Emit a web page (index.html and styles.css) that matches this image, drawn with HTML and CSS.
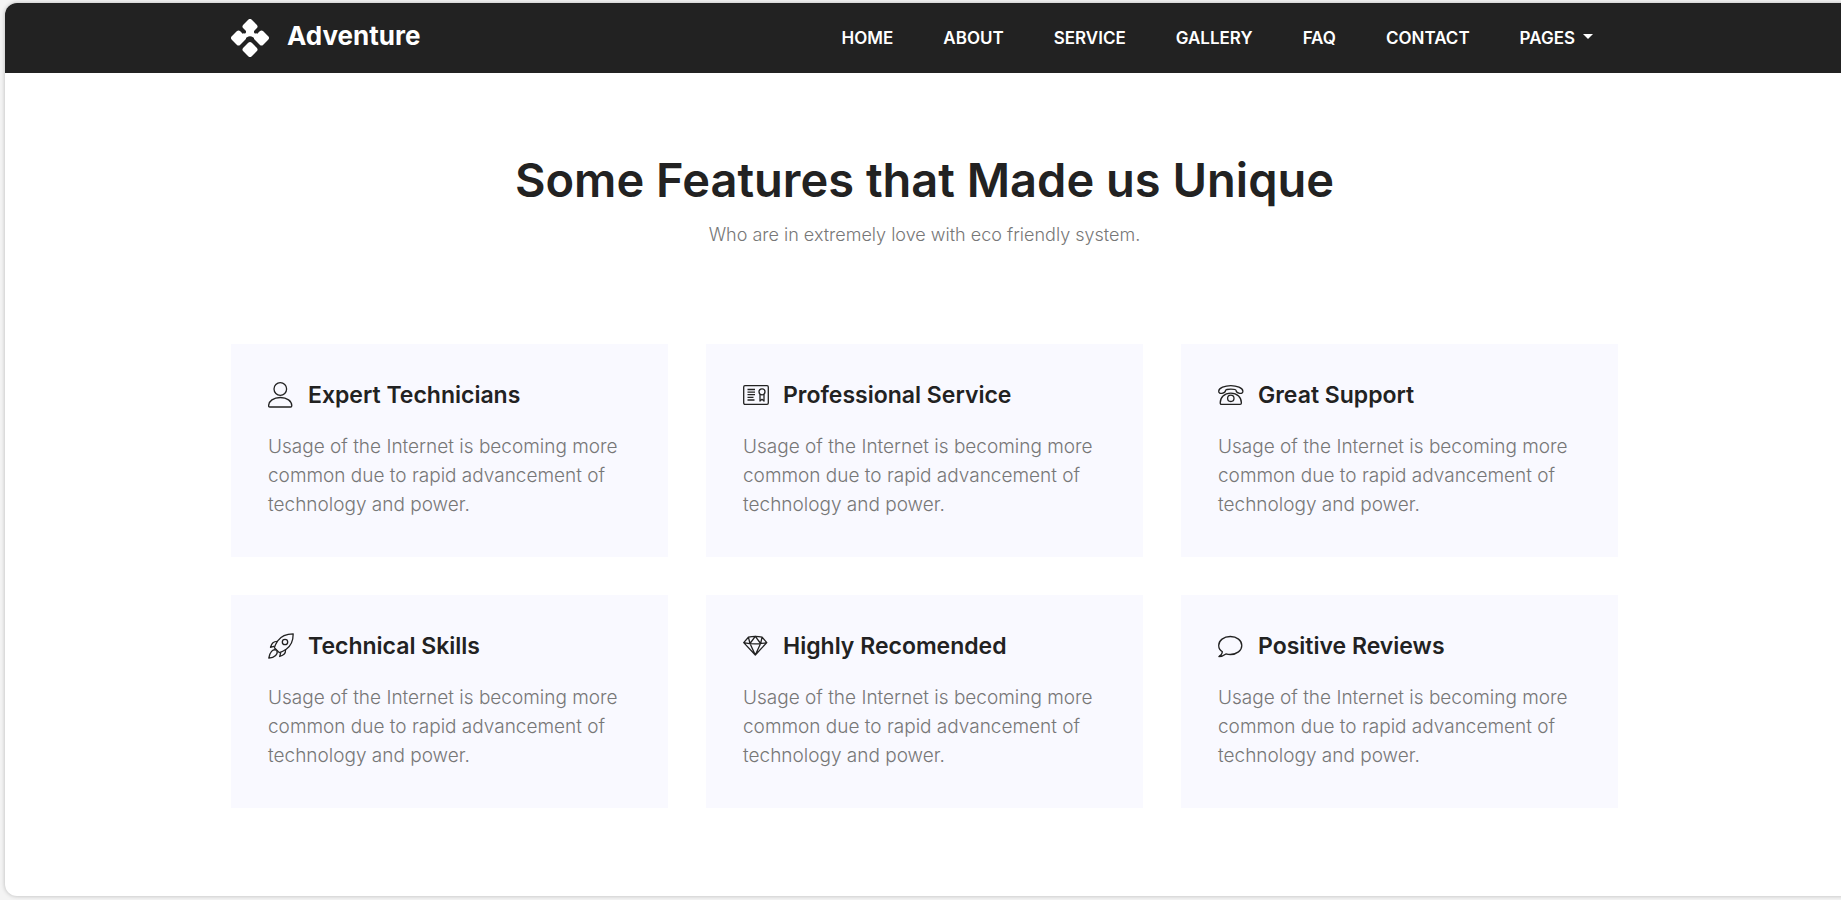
FILE: index.html
```html
<!DOCTYPE html>
<html lang="en">
<head>
<meta charset="utf-8">
<meta name="viewport" content="width=device-width, initial-scale=1">
<title>Adventure</title>
<link rel="stylesheet" href="styles.css">
</head>
<body>
<div class="frame">
  <header class="header">
    <div class="container header-row">
      <a class="brand" href="#">
        <svg class="brand-mark" viewBox="0 0 38 38" aria-hidden="true">
          <g fill="#fff">
            <rect x="-6" y="-6" width="12" height="12" rx="2.500" transform="translate(19 7.500) rotate(45)"/>
            <rect x="-6" y="-6" width="12" height="12" rx="2.500" transform="translate(7.500 19) rotate(45)"/>
            <rect x="-6" y="-6" width="12" height="12" rx="2.500" transform="translate(30.500 19) rotate(45)"/>
            <rect x="-6" y="-6" width="12" height="12" rx="2.500" transform="translate(19 30.500) rotate(45)"/>
            <path d="M15 11.500v1.700q0 1.800-3 1l-.5 7.300 4.500-3.200q3-2.200 6 0l4.500 3.200-.5-7.300q-3 .8-3-1v-1.700z"/>
          </g>
        </svg>
        <span class="brand-name">Adventure</span>
      </a>
      <nav class="nav" aria-label="Main">
        <a href="#">HOME</a>
        <a href="#">ABOUT</a>
        <a href="#">SERVICE</a>
        <a href="#">GALLERY</a>
        <a href="#">FAQ</a>
        <a href="#">CONTACT</a>
        <button class="nav-toggle" type="button" aria-haspopup="true">PAGES <span class="caret"></span></button>
      </nav>
    </div>
  </header>
  <main class="container features">
    <div class="intro">
      <h1>Some Features that Made us Unique</h1>
      <p>Who are in extremely love with eco friendly system.</p>
    </div>
    <div class="cards">
      <article class="card">
        <h2><svg class="icon" viewBox="0 0 26 26" aria-hidden="true"><circle cx="12.300" cy="7" r="6.300"/><path d="M1.800 25q-1.200 0-1.200-1.200c0-4.700 5-8.300 11.700-8.300s11.500 3.600 11.500 8.300q0 1.200-1.200 1.200z"/></svg>Expert Technicians</h2>
        <p>Usage of the Internet is becoming more common due to rapid advancement of technology and power.</p>
      </article>
      <article class="card">
        <h2><svg class="icon" viewBox="0 0 26 26" aria-hidden="true"><rect x=".7" y="3.700" width="24.600" height="18.600" rx="1.300"/><path d="M4.500 7.500h7.500M4.500 10.100h7.500M4.500 12.700h7.500M4.500 15.300h6M4.500 18h7M17 12.500v6.500l2-1.700 2 1.700v-6.500"/><circle cx="19" cy="9.800" r="3"/></svg>Professional Service</h2>
        <p>Usage of the Internet is becoming more common due to rapid advancement of technology and power.</p>
      </article>
      <article class="card">
        <h2><svg class="icon" viewBox="0 0 26 26" aria-hidden="true"><path d="M12.800 3.600C7 3.600.7 6 .7 9.300c0 1.800 1.600 2.400 3.300 2 1.800-.4 3.500-1.200 3.500-2.800 0-.8 2.200-1.400 5.300-1.400s5.300.6 5.300 1.400c0 1.600 1.700 2.400 3.500 2.800 1.700.4 3.300-.2 3.300-2 0-3.300-6.300-5.700-12.100-5.700z"/><path d="M3.500 22.400q-1.300 0-1.300-1.400c0-5.600 4-9.800 10.600-9.800s10.600 4.200 10.600 9.800q0 1.400-1.300 1.400z"/><circle cx="12.800" cy="16.300" r="3.200"/></svg>Great Support</h2>
        <p>Usage of the Internet is becoming more common due to rapid advancement of technology and power.</p>
      </article>
      <article class="card">
        <h2><svg class="icon" viewBox="0 0 26 26" aria-hidden="true"><path d="M25.200.8C17.500.8 13.300 2.700 9.700 7.800 8 10.300 7 12.500 6.400 14.700l4.900 4.900c2.200-.6 4.400-1.600 6.900-3.300 5.100-3.600 7-7.800 7-15.500z"/><circle cx="17" cy="9" r="2.700"/><path d="M9.300 8.400C5.300 8.400 4 10 2.500 14.300l4.100-1.100M17.600 16.700c0 4-1.600 5.300-5.900 6.800l1.100-4.100M8.500 17.200c-3.600-1.700-7 2.200-7.700 8 5.800-.7 9.700-4.100 8-7.700"/></svg>Technical Skills</h2>
        <p>Usage of the Internet is becoming more common due to rapid advancement of technology and power.</p>
      </article>
      <article class="card">
        <h2><svg class="icon" viewBox="0 0 26 26" aria-hidden="true"><path d="M12.300 22 .7 9.600 5.400 4.200C9.500 3.100 15 3.100 19.100 4.200l4.700 5.400zM.7 9.600c7 1.500 16.100 1.500 23.100 0M12.300 22 7 10.500l5.300-7.100 5.300 7.100zM5.400 4.200 7 10.500M19.100 4.200l-1.500 6.300"/></svg>Highly Recomended</h2>
        <p>Usage of the Internet is becoming more common due to rapid advancement of technology and power.</p>
      </article>
      <article class="card">
        <h2><svg class="icon" viewBox="0 0 26 26" aria-hidden="true"><path d="M.9 23.500c2-1.100 3.300-2.700 3.500-4.700C2 17.300.7 15 .7 12.500c0-5 5-9 11.600-9s11.500 4 11.500 9-5 9-11.500 9c-1.500 0-3-.2-4.400-.6-2 1.600-4.500 2.600-7 2.600z"/></svg>Positive Reviews</h2>
        <p>Usage of the Internet is becoming more common due to rapid advancement of technology and power.</p>
      </article>
    </div>
  </main>
</div>
</body>
</html>
```
FILE: styles.css
```css
* {
  box-sizing: border-box;
}

body {
  margin: 0;
  padding: 3px 0 4px 5px;
  overflow-x: hidden;
  background: #f4f4f4;
  color: #777;
  font-family: Inter, "Liberation Sans", sans-serif;
}

.frame {
  margin-right: -3px;
  overflow: hidden;
  border-radius: 12px 0 0 12px;
  background: #fff;
  box-shadow: 0 0 4px rgba(0, 0, 0, 0.25);
}

.container {
  width: 76%;
  max-width: 1387px;
  margin: 0 auto;
}

.header {
  background: #222;
}

.header-row {
  display: flex;
  align-items: center;
  justify-content: space-between;
  min-height: 70px;
  padding-right: 25px;
}

.brand {
  display: flex;
  align-items: center;
  gap: 18px;
  color: #fff;
  text-decoration: none;
}

.brand-mark {
  width: 38px;
  height: 38px;
}

.brand-name {
  padding-bottom: 4px;
  font-size: 26px;
  font-weight: 700;
  line-height: 30px;
}

.nav {
  display: flex;
  align-items: center;
  gap: 50px;
}

.nav a,
.nav-toggle {
  padding: 0;
  border: 0;
  background: none;
  color: #fff;
  font: 600 17px/24px Inter, "Liberation Sans", sans-serif;
  text-decoration: none;
}

.nav-toggle {
  display: flex;
  align-items: center;
  gap: 8px;
}

.caret {
  margin-bottom: 3px;
  border: 5px solid transparent;
  border-top-color: #fff;
  border-bottom: 0;
}

.features {
  padding: 78px 0 88px;
}

.intro {
  margin-bottom: 95px;
  text-align: center;
}

.intro h1 {
  margin: 0 0 11px;
  color: #222;
  font-size: 47px;
  font-weight: 600;
  line-height: 58px;
}

.intro p,
.card p {
  margin: 0;
  font-size: 18px;
  font-weight: 300;
  line-height: 29px;
}

.card p {
  font-size: 19px;
}

.cards {
  display: grid;
  grid-template-columns: repeat(3, 1fr);
  gap: 38px;
}

.card {
  padding: 36px 37px 38px;
  background: #f9f9ff;
}

.card h2 {
  display: flex;
  align-items: center;
  gap: 14px;
  margin: 0 0 22px;
  color: #222;
  font-size: 23px;
  font-weight: 600;
  line-height: 30px;
}

.icon {
  flex: none;
  width: 26px;
  height: 26px;
  fill: none;
  stroke: #222;
  stroke-width: 1.3;
  stroke-linejoin: round;
}
```
